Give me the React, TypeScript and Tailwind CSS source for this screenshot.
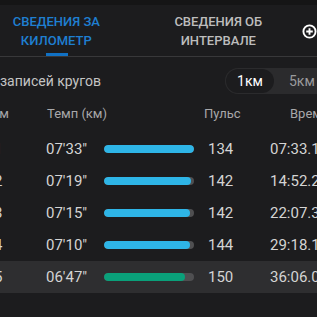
import React from 'react';

const laps = [
  { km: 1, pace: "07'33\"", pct: 100, hr: 134, time: '07:33.1', best: false },
  { km: 2, pace: "07'19\"", pct: 97, hr: 142, time: '14:52.2', best: false },
  { km: 3, pace: "07'15\"", pct: 96, hr: 142, time: '22:07.3', best: false },
  { km: 4, pace: "07'10\"", pct: 95, hr: 144, time: '29:18.1', best: false },
  { km: 5, pace: "06'47\"", pct: 90, hr: 150, time: '36:06.0', best: true },
];

const PaceBar: React.FC<{ pct: number; best: boolean }> = ({ pct, best }) => (
  <div className="h-[8px] w-[90px] rounded-full bg-[#4f4f51] overflow-hidden">
    <div
      className={`h-full rounded-full ${best ? 'bg-[#0aa07a]' : 'bg-[#2eb5e7]'}`}
      style={{ width: `${pct}%` }}
    />
  </div>
);

export default function App() {
  return (
    <div
      className="w-[317px] h-[317px] overflow-hidden bg-[#1c1c1e] text-[#d4d4d4]"
      style={{ fontFamily: 'Roboto, "Noto Sans", sans-serif' }}
    >
      <div className="h-[5px] bg-[#151516]" />

      {/* tabs */}
      <div className="flex items-stretch h-[52px] border-b border-[#38383a]">
        <div className="w-[114px] flex flex-col items-center pt-[7px] relative">
          <span className="text-[13px] leading-[19px] font-medium text-[#1f7fd1] whitespace-nowrap">СВЕДЕНИЯ ЗА</span>
          <span className="text-[13px] leading-[19px] font-medium text-[#1f7fd1] whitespace-nowrap">КИЛОМЕТР</span>
          <div className="absolute bottom-0 left-[46px] w-[22px] h-[3px] bg-[#1171c4]" />
        </div>
        <div className="w-[214px] flex flex-col items-center pt-[7px]">
          <span className="text-[13px] leading-[19px] font-medium text-[#bdbdbd] whitespace-nowrap">СВЕДЕНИЯ ОБ</span>
          <span className="text-[13px] leading-[19px] font-medium text-[#bdbdbd] whitespace-nowrap">ИНТЕРВАЛЕ</span>
        </div>
        <div className="flex items-center -ml-[22px] pt-[2px]">
          <svg width="15" height="15" viewBox="0 0 16 16" fill="none" stroke="#ffffff" strokeWidth="2">
            <circle cx="8" cy="8" r="6.5" />
            <path d="M8 4.5v7M4.5 8h7" />
          </svg>
        </div>
      </div>

      {/* lap count + segment */}
      <div className="flex items-center justify-between h-[44px] mt-[2px]">
        <span className="text-[14px] text-[#c4c4c4] whitespace-nowrap">записей кругов</span>
        <div className="flex items-center h-[26px] w-[110px] shrink-0 rounded-full bg-[#2b2b2d] p-[1px] -mr-[18px]">
          <div className="h-full w-[48px] rounded-full bg-[#1c1c1e] flex items-center justify-center text-[14px] text-white">1км</div>
          <div className="flex-1 flex items-center pl-[15px] text-[14px] text-[#9a9a9c]">5км</div>
        </div>
      </div>

      {/* header */}
      <div className="grid grid-cols-[56px_157px_86px_80px] items-center h-[22px] -ml-[9px] text-[13px] text-[#a8a8aa] whitespace-nowrap">
        <span>Км</span>
        <span>Темп (км)</span>
        <span>Пульс</span>
        <span>Время</span>
      </div>

      {/* rows */}
      <div className="mt-[8px]">
        {laps.map((l) => (
          <div
            key={l.km}
            className={`grid grid-cols-[52px_58px_104px_62px_80px] items-center h-[32px] -ml-[6px] w-[340px] text-[15px] whitespace-nowrap ${l.best ? 'bg-[#2e2e30]' : ''}`}
          >
            <span>{l.km}</span>
            <span>{l.pace}</span>
            <PaceBar pct={l.pct} best={l.best} />
            <span>{l.hr}</span>
            <span>{l.time}</span>
          </div>
        ))}
      </div>
    </div>
  );
}
